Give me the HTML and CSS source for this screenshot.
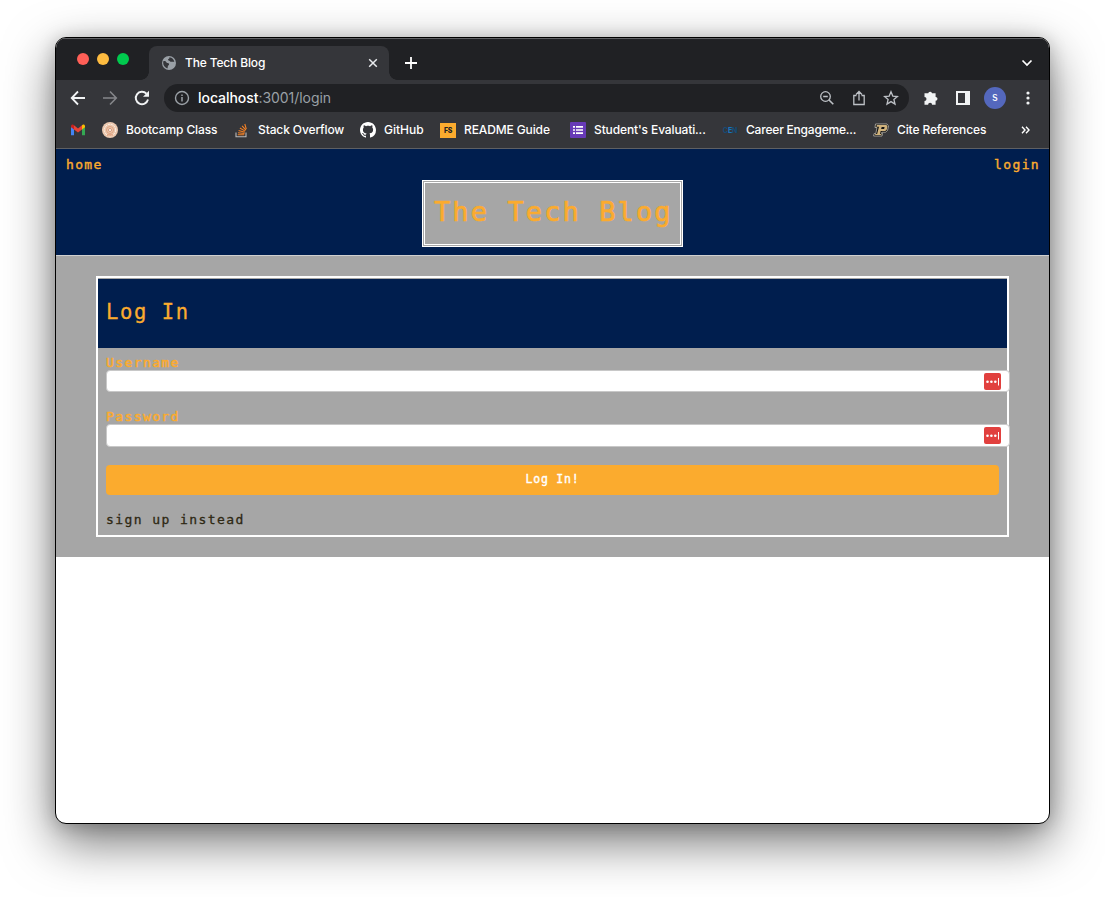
FILE: index.html
```html
<!DOCTYPE html>
<html lang="en">
<head>
<meta charset="utf-8">
<title>The Tech Blog</title>
<link rel="stylesheet" href="styles.css">
</head>
<body>
<div class="window">
  <div class="tabbar">
    <div class="lights"><i class="red"></i><i class="yellow"></i><i class="green"></i></div>
    <div class="tab">
      <svg class="globe" width="14" height="14" viewBox="0 0 14 14"><circle cx="7" cy="7" r="7" fill="#9aa0a6"/><path d="M1.3 5.2c1.7-.3 2.6.2 3 1.1.5 1 1.7.6 2.4 1.1.8.6.2 1.7-.5 2.1-.6.4-.2 1.5-.8 2.9C2.900 11.700 1.200 9.500 1.200 7zM7.300 1.300c.4 1-.2 1.500-1 1.900-.7.400-.300 1.200.5 1.300 1 .1 1 .9 1.800 1.200.9.3 2-.2 3.700.3C12 3.500 10.200 1.500 7.300 1.300z" fill="#35363a"/></svg>
      <span class="tab-title">The Tech Blog</span>
      <svg width="10" height="10" viewBox="0 0 10 10"><path d="M1.200 1.200l7.600 7.600M8.800 1.200L1.200 8.800" stroke="#e8eaed" stroke-width="1.500"/></svg>
    </div>
    <svg class="plus" width="12" height="12" viewBox="0 0 12 12"><path d="M6 0v12M0 6h12" stroke="#fff" stroke-width="1.800"/></svg>
    <svg class="chevron" width="12" height="8" viewBox="0 0 12 8"><path d="M1.500 1.500L6 6l4.500-4.500" fill="none" stroke="#fff" stroke-width="1.700"/></svg>
  </div>
  <div class="toolbar">
    <svg width="16" height="16" viewBox="0 0 16 16"><path d="M15 8H2M8 1.500L1.700 8 8 14.500" fill="none" stroke="#f1f3f4" stroke-width="1.800"/></svg>
    <svg width="16" height="16" viewBox="0 0 16 16"><path d="M1 8h13M8 1.500L14.300 8 8 14.500" fill="none" stroke="#85868a" stroke-width="1.600"/></svg>
    <svg width="16" height="16" viewBox="0 0 16 16"><path d="M14 9.500A6.200 6.200 0 1 1 12.500 3.700" fill="none" stroke="#f1f3f4" stroke-width="1.900"/><path d="M15 .8v6H9z" fill="#f1f3f4"/></svg>
    <div class="address">
      <svg width="16" height="16" viewBox="0 0 16 16"><circle cx="8" cy="8" r="6.500" fill="none" stroke="#9aa0a6" stroke-width="1.400"/><path d="M8 7v4.500M8 4.400v1.500" stroke="#9aa0a6" stroke-width="1.500"/></svg>
      <span class="url"><b>localhost</b>:3001/login</span>
      <svg width="16" height="16" viewBox="0 0 16 16"><circle cx="6.500" cy="6.500" r="4.800" fill="none" stroke="#bdc1c6" stroke-width="1.300"/><path d="M4.200 6.500h4.600M10 10l4.300 4.300" stroke="#bdc1c6" stroke-width="1.600"/></svg>
      <svg width="16" height="16" viewBox="0 0 16 16"><path d="M5.500 5.500H2.800v9h10.400v-9h-2.700M8 10.500V2M5 4.500l3-3 3 3" fill="none" stroke="#bdc1c6" stroke-width="1.300"/></svg>
      <svg width="16" height="16" viewBox="0 0 16 16"><path d="M8 1.800l1.800 4.300 4.600.4-3.500 3 1.100 4.600-4-2.500-4 2.500 1.100-4.600-3.500-3 4.600-.4z" fill="none" stroke="#bdc1c6" stroke-width="1.300"/></svg>
    </div>
    <svg width="16" height="16" viewBox="0 0 16 16"><path d="M1.500 3.200h3.700a1.900 1.900 0 0 1 3.700-.1v.1h3.700v3.700a1.900 1.900 0 0 1 0 3.800v4.100H9.100a2 2 0 0 0-4 0H1.500v-3.700a2 2 0 0 0 0-4z" fill="#f1f3f4"/></svg>
    <svg width="14" height="14" viewBox="0 0 14 14"><path fill-rule="evenodd" d="M0 0h14v14H0zM2 2v10h7V2z" fill="#f1f3f4"/></svg>
    <span class="avatar">s</span>
    <svg width="4" height="14" viewBox="0 0 4 14"><g fill="#f1f3f4"><circle cx="2" cy="2" r="1.600"/><circle cx="2" cy="7" r="1.600"/><circle cx="2" cy="12" r="1.600"/></g></svg>
  </div>
  <div class="bookmarks">
    <a><svg width="16" height="16" viewBox="0 0 16 16"><path d="M1 4v9.300h3V7z" fill="#4285f4"/><path d="M12 7v6.300h3V4z" fill="#34a853"/><path d="M4 3.200l4 3.200 4-3.200v4.200l-4 3.200-4-3.200z" fill="#ea4335"/><path d="M1 4.500C1 2.400 3 2.200 4 3.200v4.200L1 5.200z" fill="#c5221f"/><path d="M15 4.500c0-2.100-2-2.300-3-1.300v4.200l3-2.200z" fill="#fbbc04"/></svg></a>
    <a><svg width="16" height="16" viewBox="0 0 16 16"><circle cx="8" cy="8" r="8" fill="#ecc9b0"/><circle cx="8" cy="8" r="5.700" fill="none" stroke="#fff3e8" stroke-width="1" stroke-dasharray="2 1"/><circle cx="8" cy="8" r="3.500" fill="none" stroke="#d99874" stroke-width=".8"/><circle cx="8" cy="8" r="1.500" fill="#fff" stroke="#c97850" stroke-width=".7"/><path d="M5 13h6" stroke="#d88b62"/></svg><span>Bootcamp Class</span></a>
    <a><svg width="16" height="16" viewBox="0 0 16 16"><path d="M2 10.500v4.300h10v-4.300" fill="none" stroke="#bcbbbb" stroke-width="1.100"/><path d="M3.800 12.800h6.500M4 10.800l6.500.7M4.600 8.500l6.200 1.700M5.900 6l5.300 3.100M8.100 3.800l3.800 4.400M10.800 2l1.500 5.200" stroke="#f48024" stroke-width="1.100"/></svg><span>Stack Overflow</span></a>
    <a><svg width="16" height="16" viewBox="0 0 16 16"><path fill="#fff" d="M8 0C3.580 0 0 3.580 0 8c0 3.540 2.290 6.530 5.470 7.590.4.070.55-.17.55-.38 0-.19-.01-.82-.01-1.490-2.010.37-2.530-.49-2.690-.94-.09-.23-.48-.94-.82-1.130-.28-.15-.68-.52-.01-.53.63-.01 1.080.58 1.230.82.72 1.210 1.870.87 2.330.66.07-.52.28-.87.51-1.070-1.780-.2-3.640-.89-3.640-3.950 0-.87.31-1.590.82-2.150-.08-.2-.36-1.020.08-2.120 0 0 .67-.21 2.200.82.64-.18 1.320-.27 2-.27s1.360.09 2 .27c1.530-1.040 2.200-.82 2.200-.82.44 1.100.16 1.920.08 2.120.51.56.82 1.270.82 2.150 0 3.070-1.870 3.750-3.650 3.950.29.25.54.73.54 1.480 0 1.070-.01 1.930-.01 2.200 0 .21.15.46.55.38A8.010 8.010 0 0 0 16 8c0-4.420-3.580-8-8-8z"/></svg><span class="plain">GitHub</span></a>
    <a><span class="fs">FS</span><span>README Guide</span></a>
    <a><svg width="16" height="16" viewBox="0 0 16 16"><rect width="16" height="16" rx="1" fill="#673ab7"/><path d="M6 4.900h7M6 8h7M6 11.100h7M3 4.900h2M3 8h2M3 11.100h2" stroke="#fff" stroke-width="1.700"/></svg><span>Student's Evaluati...</span></a>
    <a><span class="cen">C<em>E</em>N</span><span class="tight">Career Engageme...</span></a>
    <a><svg width="16" height="16" viewBox="0 0 16 16"><path d="M2.500 2h11.500l1.500 2-1 4.500-2 1.700H8.800L8.500 11.500h1L9 14H.6l.6-2.500h1.600L4 5.500H2z" fill="#111" stroke="#e5e0d4" stroke-width=".6"/><path fill-rule="evenodd" d="M3.800 3h9.700l1 1.500-.8 3.200-1.500 1.400H7.700L7 11.900h1.500l-.3 1H2l.3-1h1.800L6 4.700H3.500zM8.700 5l-.6 2.100h3L11.600 5z" fill="#cfb27c"/></svg><span>Cite References</span></a>
    <svg class="more" width="9" height="8" viewBox="0 0 9 8"><path d="M1 .8L4 4 1 7.200M5 .8L8 4 5 7.200" fill="none" stroke="#fff" stroke-width="1.400"/></svg>
  </div>
  <header class="site-header">
    <nav><a>home</a><a>login</a></nav>
    <h1>The Tech Blog</h1>
  </header>
  <main>
    <section class="card">
      <h2>Log In</h2>
      <form>
        <label>Username</label>
        <div class="field"><svg width="17" height="17" viewBox="0 0 17 17"><rect width="17" height="17" rx="2" fill="#e1403e"/><g fill="#fff"><circle cx="3.500" cy="8.700" r="1.300"/><circle cx="7.400" cy="8.700" r="1.300"/><circle cx="11.300" cy="8.700" r="1.300"/><path d="M14 5h1v7.500h-1z"/></g></svg></div>
        <label>Password</label>
        <div class="field"><svg width="17" height="17" viewBox="0 0 17 17"><rect width="17" height="17" rx="2" fill="#e1403e"/><g fill="#fff"><circle cx="3.500" cy="8.700" r="1.300"/><circle cx="7.400" cy="8.700" r="1.300"/><circle cx="11.300" cy="8.700" r="1.300"/><path d="M14 5h1v7.500h-1z"/></g></svg></div>
        <button type="button">Log In!</button>
        <a class="signup">sign up instead</a>
      </form>
    </section>
  </main>
</div>
</body>
</html>
```
FILE: styles.css
```css
* { box-sizing: border-box; }
body { margin: 0; padding: 37px 55px 0; height: 897px; overflow: hidden; background: #fff; font-family: Inter, "Liberation Sans", sans-serif; }
svg { display: block; flex: none; }
.window { width: 995px; height: 787px; border: 1px solid #000; border-radius: 11px; overflow: hidden; background: #fff; box-shadow: 0 18px 50px rgba(0,0,0,.55), 0 2px 18px rgba(0,0,0,.2); }

.tabbar { height: 42px; background: #202124; display: flex; align-items: flex-end; box-shadow: inset 0 1px #606164; }
.lights { display: flex; gap: 8px; width: 93px; padding: 0 0 15px 21px; }
.lights i { width: 12px; height: 12px; border-radius: 50%; }
.red { background: #ff5f57; }
.yellow { background: #febc40; }
.green { background: #00ca4e; }
.tab { position: relative; width: 240px; height: 34px; padding: 0 11px 0 13px; border-radius: 8px 8px 0 0; background: #35363a; display: flex; align-items: center; color: #fff; }
.tab::before, .tab::after { content: ""; position: absolute; bottom: 0; width: 8px; height: 8px; }
.tab::before { left: -8px; background: radial-gradient(circle at 0 0, #202124 7.5px, #35363a 8px); }
.tab::after { right: -8px; background: radial-gradient(circle at 100% 0, #202124 7.5px, #35363a 8px); }
.tab-title { margin-left: 9px; padding-bottom: 2px; flex: 1; font-size: 12px; font-weight: 500; letter-spacing: -.15px; }
.plus { margin: 0 auto 11px 16px; }
.chevron { margin: 0 16px 13px 0; }

.toolbar { height: 36px; background: #35363a; display: flex; align-items: center; padding: 0 19px 0 14px; }
.toolbar > svg:nth-child(-n+3) { margin-right: 16px; }
.address { width: 746px; height: 28px; margin: 0 14px 0 -2px; padding: 0 10px; border-radius: 14px; background: #202124; display: flex; align-items: center; gap: 16px; }
.url { flex: 1; margin-left: -8px; padding-bottom: 2px; color: #9aa0a6; font-size: 14px; letter-spacing: -.05px; }
.url b { color: #fff; font-weight: 500; }
.avatar { width: 22px; height: 22px; margin: 0 20px 0 14px; border-radius: 50%; background: #5468bd; color: #fff; text-align: center; font-size: 11px; line-height: 21px; }
.toolbar > svg:nth-of-type(4) { margin-right: 17px; }

.bookmarks { height: 33px; background: #35363a; border-bottom: 1px solid #5f6063; display: grid; grid-template-columns: 32px 132px 126px 80px 130px 152px 151px 148px 1fr; padding: 0 0 4px 14px; align-items: center; color: #fff; font-size: 12px; font-weight: 500; letter-spacing: -.12px; white-space: nowrap; }
.bookmarks a { display: flex; align-items: center; gap: 8px; }
.bookmarks a > span:last-child { padding-bottom: 2px; }
.bookmarks .plain { letter-spacing: 0; }
.bookmarks .tight { letter-spacing: -.2px; }
.fs { width: 16px; height: 15px; background: #fbab2e; color: #222; font-size: 7px; font-weight: 800; line-height: 15px; text-align: center; letter-spacing: -.3px; }
.cen { width: 16px; color: #164a75; font-size: 7px; font-weight: 800; text-align: center; letter-spacing: -.2px; }
.cen em { color: #1873bd; font-style: normal; }

.site-header { height: 107px; background: #001e4e; border-bottom: 1px solid #d0d0d0; padding: 7px 10px 0; font-family: "DejaVu Sans Mono", monospace; color: #fbab2e; }
.site-header nav { height: 24px; display: flex; justify-content: space-between; font-size: 13px; line-height: 17px; letter-spacing: 1.35px; -webkit-text-stroke: .4px; }
.site-header nav a:last-child { margin-right: -1px; }
h1 { width: 261px; height: 67px; margin: 0 auto; border: 3px double #fff; background: #a6a6a6; font-size: 27px; font-weight: 400; line-height: 57px; letter-spacing: 2.1px; padding-left: 9px; white-space: nowrap; -webkit-text-stroke: .7px; }
main { height: 301px; padding: 20px 40px; background: #a6a6a6; font-family: "DejaVu Sans Mono", monospace; }
.card { height: 261px; border: 2px solid #fff; }
h2 { height: 70px; margin: 0; padding-left: 8px; background: #001e4e; border-top: 1px solid #a6a6a6; color: #fbab2e; font-size: 20.5px; font-weight: 400; line-height: 67px; letter-spacing: 1.6px; -webkit-text-stroke: .3px; }
form { display: flex; flex-direction: column; padding: 6px 8px; }
label { height: 16px; color: #fbab2e; font-size: 13px; line-height: 17px; letter-spacing: 1.4px; -webkit-text-stroke: .5px; }
.field { width: 904px; height: 22px; margin-bottom: 16px; border: 1px solid #c8c8c8; border-radius: 4px; background: #fff; display: flex; align-items: center; justify-content: flex-end; padding-right: 8px; }
.field:nth-of-type(2) { height: 23px; margin-bottom: 18px; }
button { height: 30px; margin-bottom: 17px; border: 0; padding: 0 0 2px; border-radius: 4px; background: #fbab2e; color: #fff; font: 11.5px "DejaVu Sans Mono", monospace; letter-spacing: .82px; -webkit-text-stroke: .4px; }
.signup { color: #2e2813; font-size: 13px; line-height: 16px; letter-spacing: 1.42px; -webkit-text-stroke: .3px; }
```
